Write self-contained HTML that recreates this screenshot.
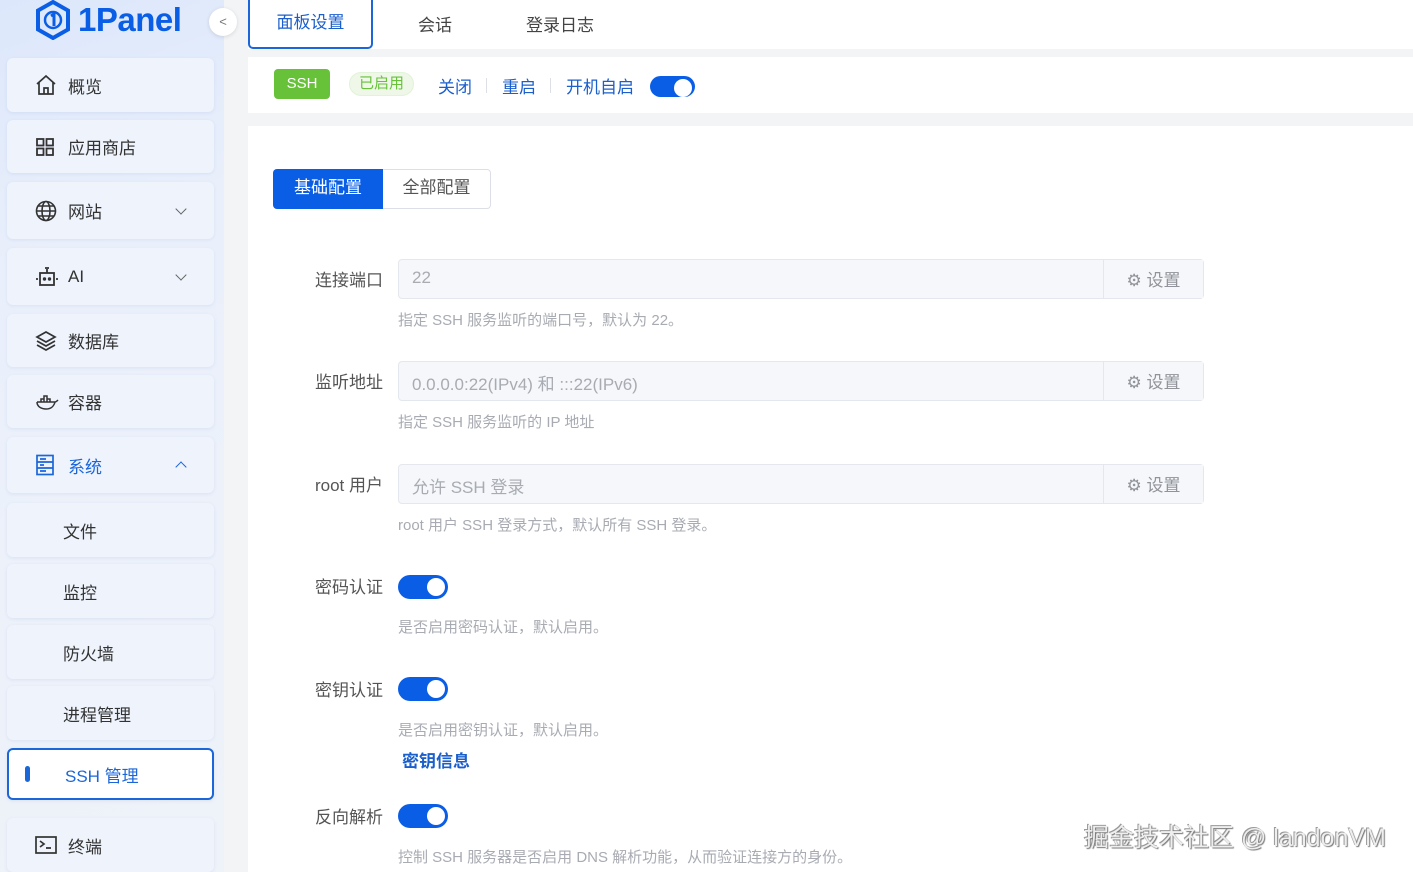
<!DOCTYPE html>
<html><head><meta charset="utf-8"><style>
*{box-sizing:border-box;margin:0;padding:0}
body{width:1413px;height:872px;overflow:hidden;font-family:"Liberation Sans","Noto Sans CJK SC",sans-serif;background:#f3f4f6;position:relative;color:#333}
.side{position:absolute;left:0;top:0;width:224px;height:872px;background:linear-gradient(160deg,#dce7fb 0%,#eaf0fb 30%,#eef2f9 100%)}
.it{position:absolute;left:7px;width:207px;background:#eef3fc;border-radius:6px;box-shadow:0 1px 3px rgba(120,150,200,.15);font-size:17px;color:#333;display:flex;align-items:center}
.it svg{position:absolute;left:28px}
.it .t{position:absolute;left:61px}
.it .ar{position:absolute;left:170px;width:8px;height:8px;border-right:1.3px solid #666;border-bottom:1.3px solid #666;transform:rotate(45deg);top:calc(50% - 6px)}
.sub .t{left:56px}
.abs{position:absolute}
.help{position:absolute;left:398px;font-size:15px;color:#a8abb2}
.lab{position:absolute;width:110px;left:273px;text-align:right;font-size:17px;color:#555}
.inp{position:absolute;left:398px;width:806px;height:40px;border:1px solid #e4e7ed;border-radius:4px;background:#f5f7fa}
.inp .v{position:absolute;left:13px;top:8px;font-size:17px;color:#a8abb2}
.inp .b{position:absolute;right:0;top:0;width:100px;height:38px;border-left:1px solid #e4e7ed;background:#f5f7fa;font-size:17px;color:#909399;display:flex;align-items:center;justify-content:center;gap:8px;padding-bottom:2px}
.sw{position:absolute;left:398px;width:50px;height:24px;border-radius:12px;background:#0a5ee6}
.sw::after{content:"";position:absolute;right:3px;top:3px;width:18px;height:18px;border-radius:50%;background:#fff}
</style></head><body>
<div class="side">
 <div class="abs" style="left:35px;top:0;height:40px;display:flex;align-items:center">
  <svg width="36" height="40" viewBox="0 0 36 40"><path d="M18 2L33 10.5V29.5L18 38L3 29.5V10.5Z" fill="none" stroke="#0a5ee6" stroke-width="4"/><circle cx="18" cy="20" r="8" fill="none" stroke="#0a5ee6" stroke-width="2.5"/><path d="M16 16l3-2v12" stroke="#0a5ee6" stroke-width="3" fill="none"/></svg>
  <span style="font-size:33px;font-weight:bold;color:#0a5ee6;margin-left:7px;letter-spacing:-0.5px">1Panel</span>
 </div>
 <div class="abs" style="left:209px;top:8px;width:28px;height:28px;border-radius:50%;background:#fff;box-shadow:0 1px 4px rgba(0,0,0,.12);font-size:13px;color:#777;text-align:center;line-height:27px">&lt;</div>
 <div class="it" style="top:58px;height:54px"><svg width="22" height="22" viewBox="0 0 22 22" fill="none" stroke="#333" stroke-width="1.7"><path d="M2 10L11 2l9 8M4 8v12h14V8M9 20v-6h4v6"/></svg><span class="t">概览</span></div>
 <div class="it" style="top:120px;height:53px"><svg width="20" height="20" viewBox="0 0 20 20" fill="none" stroke="#333" stroke-width="1.8"><rect x="2" y="2" width="6.5" height="6.5"/><rect x="11.5" y="2" width="6.5" height="6.5"/><rect x="2" y="11.5" width="6.5" height="6.5"/><rect x="11.5" y="11.5" width="6.5" height="6.5"/></svg><span class="t">应用商店</span></div>
 <div class="it" style="top:182px;height:57px"><svg width="22" height="22" viewBox="0 0 22 22" fill="none" stroke="#333" stroke-width="1.6"><circle cx="11" cy="11" r="9.5"/><ellipse cx="11" cy="11" rx="4" ry="9.5"/><path d="M1.5 11h19M3 6h16M3 16h16"/></svg><span class="t">网站</span><span class="ar"></span></div>
 <div class="it" style="top:248px;height:57px"><svg width="24" height="22" viewBox="0 0 24 22" fill="none" stroke="#333" stroke-width="1.8"><rect x="5" y="7" width="14" height="12"/><path d="M12 7V3M10 2h4M1 13h2M21 13h2"/><circle cx="9.5" cy="13" r=".8" fill="#333"/><circle cx="14.5" cy="13" r=".8" fill="#333"/></svg><span class="t">AI</span><span class="ar"></span></div>
 <div class="it" style="top:314px;height:53px"><svg width="22" height="22" viewBox="0 0 22 22" fill="none" stroke="#333" stroke-width="1.7"><path d="M11 2L20 7l-9 5-9-5z"/><path d="M2 11l9 5 9-5M2 15l9 5 9-5"/></svg><span class="t">数据库</span></div>
 <div class="it" style="top:375px;height:53px"><svg width="24" height="20" viewBox="0 0 24 20" fill="none" stroke="#333" stroke-width="1.5"><path d="M2 10h18c1 0 2-1 3-2M2 10c0 5 5 7 9 7 5 0 8-3 9-7"/><path d="M6 10V7h3v3M9 10V4h3v6M12 10V7h3v3"/></svg><span class="t">容器</span></div>
 <div class="it" style="top:437px;height:56px;color:#1b66d9"><svg width="20" height="22" viewBox="0 0 20 22" fill="none" stroke="#1b66d9" stroke-width="1.7"><rect x="2" y="1.5" width="16" height="19"/><path d="M2 8h16M2 14h16M5 5h6M5 11h4M5 17h6"/></svg><span class="t">系统</span><span class="ar" style="transform:rotate(-135deg);top:calc(50% - 2px);border-color:#1b66d9"></span></div>
 <div class="it sub" style="top:503px;height:54px"><span class="t">文件</span></div>
 <div class="it sub" style="top:564px;height:54px"><span class="t">监控</span></div>
 <div class="it sub" style="top:625px;height:54px"><span class="t">防火墙</span></div>
 <div class="it sub" style="top:686px;height:54px"><span class="t">进程管理</span></div>
 <div class="it sub" style="top:748px;height:52px;background:#fff;border:2px solid #1b66d9;color:#1b66d9"><span class="abs" style="left:16px;top:16px;width:5px;height:16px;border-radius:3px;background:#1b66d9"></span><span class="t">SSH 管理</span></div>
 <div class="it" style="top:818px;height:54px"><svg width="22" height="18" viewBox="0 0 22 18" fill="none" stroke="#333" stroke-width="1.7"><rect x="1" y="1" width="20" height="16"/><path d="M5 5l4 3-4 3M11 12h5"/></svg><span class="t">终端</span></div>
</div>
<div class="abs" style="left:248px;top:0;width:1165px;height:49px;background:#fff"></div>
<div class="abs" style="left:248px;top:0;width:125px;height:49px;border:2px solid #1b66d9;border-top:none;border-radius:0 0 5px 5px;font-size:17px;color:#1b5fcc;text-align:center;line-height:46px">面板设置</div>
<div class="abs" style="left:418px;top:11px;font-size:17px;color:#444">会话</div>
<div class="abs" style="left:526px;top:11px;font-size:17px;color:#444">登录日志</div>
<div class="abs" style="left:248px;top:57px;width:1165px;height:56px;background:#fff"></div>
<div class="abs" style="left:274px;top:69px;width:56px;height:30px;background:#67c23a;border-radius:4px;color:#fff;font-size:15px;text-align:center;line-height:30px">SSH</div>
<div class="abs" style="left:349px;top:72px;width:65px;height:24px;background:#eef7e8;border:1px solid #e1f3d8;border-radius:12px;color:#67c23a;font-size:15px;text-align:center;line-height:22px">已启用</div>
<div class="abs" style="left:438px;top:73px;font-size:17px;color:#1b5fcc">关闭</div>
<div class="abs" style="left:486px;top:78px;width:1px;height:15px;background:#dcdfe6"></div>
<div class="abs" style="left:502px;top:73px;font-size:17px;color:#1b5fcc">重启</div>
<div class="abs" style="left:550px;top:78px;width:1px;height:15px;background:#dcdfe6"></div>
<div class="abs" style="left:566px;top:73px;font-size:17px;color:#1b5fcc">开机自启</div>
<div class="sw" style="left:650px;top:76px;width:45px;height:21px"></div>
<div class="abs" style="left:248px;top:126px;width:1165px;height:746px;background:#fff"></div>
<div class="abs" style="left:273px;top:169px;width:110px;height:40px;background:#0a5ee6;border-radius:4px 0 0 4px;color:#fff;font-size:17px;text-align:center;line-height:38px">基础配置</div>
<div class="abs" style="left:383px;top:169px;width:108px;height:40px;border:1px solid #dcdfe6;border-left:none;border-radius:0 4px 4px 0;color:#555;font-size:17px;text-align:center;line-height:36px">全部配置</div>

<div class="lab" style="top:266px">连接端口</div>
<div class="inp" style="top:259px"><span class="v">22</span><span class="b">⚙ 设置</span></div>
<div class="help" style="top:309px">指定 SSH 服务监听的端口号，默认为 22。</div>
<div class="lab" style="top:368px">监听地址</div>
<div class="inp" style="top:361px"><span class="v">0.0.0.0:22(IPv4) 和 :::22(IPv6)</span><span class="b">⚙ 设置</span></div>
<div class="help" style="top:411px">指定 SSH 服务监听的 IP 地址</div>
<div class="lab" style="top:471px">root 用户</div>
<div class="inp" style="top:464px"><span class="v">允许 SSH 登录</span><span class="b">⚙ 设置</span></div>
<div class="help" style="top:514px">root 用户 SSH 登录方式，默认所有 SSH 登录。</div>
<div class="lab" style="top:573px">密码认证</div>
<div class="sw" style="top:575px"></div>
<div class="help" style="top:616px">是否启用密码认证，默认启用。</div>
<div class="lab" style="top:676px">密钥认证</div>
<div class="sw" style="top:677px"></div>
<div class="help" style="top:719px">是否启用密钥认证，默认启用。</div>
<div class="abs" style="left:402px;top:747px;font-size:17px;color:#1b5fcc;font-weight:bold">密钥信息</div>
<div class="lab" style="top:803px">反向解析</div>
<div class="sw" style="top:804px"></div>
<div class="help" style="top:846px">控制 SSH 服务器是否启用 DNS 解析功能，从而验证连接方的身份。</div>
<div class="abs" style="left:1084px;top:818px;font-size:25px;color:#eee;text-shadow:1px 1px 1px #777,-1px -1px 0 #999">掘金技术社区 @ landonVM</div>
</body></html>
